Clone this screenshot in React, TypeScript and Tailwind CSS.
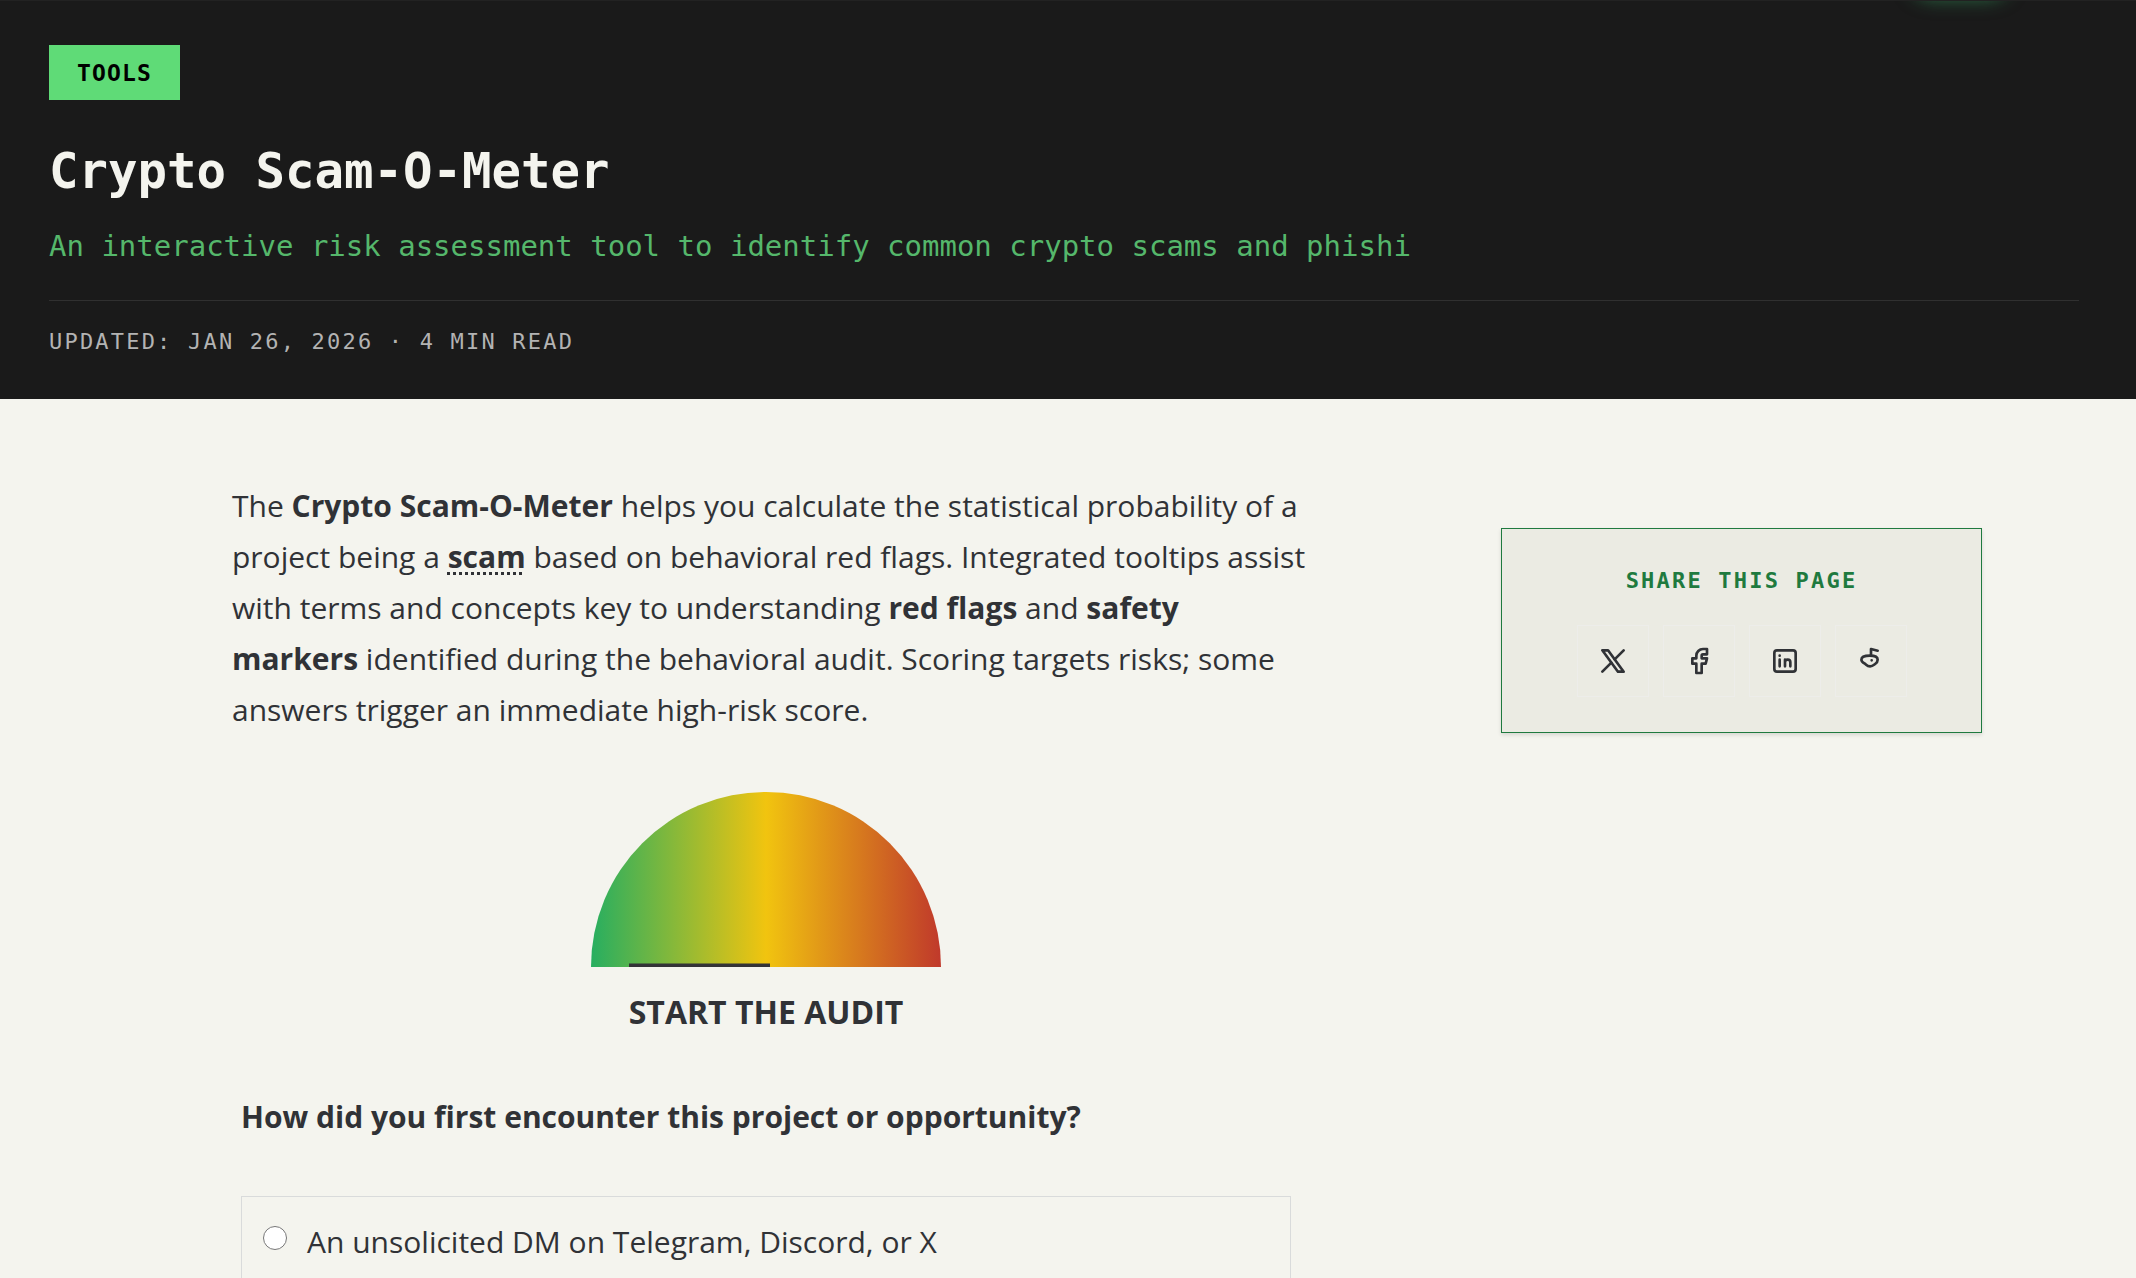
import { useState } from 'react';

const mono = "font-['DejaVu_Sans_Mono',monospace]";

const shareLinks = [
  {
    name: 'X',
    href: '#share-x',
    paths: ['M4 4l11.733 16h4.267l-11.733 -16z', 'M4 20l6.768 -6.768m2.46 -2.46l6.772 -6.772'],
  },
  {
    name: 'Facebook',
    href: '#share-facebook',
    paths: ['M7 10v4h3v7h4v-7h3l1 -4h-4v-2a1 1 0 0 1 1 -1h3v-4h-3a5 5 0 0 0 -5 5v2h-3'],
  },
  {
    name: 'LinkedIn',
    href: '#share-linkedin',
    paths: [
      'M4 6a2 2 0 0 1 2 -2h12a2 2 0 0 1 2 2v12a2 2 0 0 1 -2 2h-12a2 2 0 0 1 -2 -2z',
      'M8 11v5M8 8v.01M12 16v-5M16 16v-3a2 2 0 0 0 -4 0',
    ],
  },
  {
    name: 'Reddit',
    href: '#share-reddit',
    paths: [
      'M11.200 8c3.500 0 5.800 .8 5.800 3c0 2.200 -1.400 2.800 -2.400 3.600c-1 .8 -1.800 1.400 -3.300 1.400s-2.300 -.6 -3.200 -1.400c-1.200 -1 -3.300 -1.600 -3.300 -3.600c0 -2.200 2.400 -3 6.400 -3z',
      'M12 8v-5l5 1.300M12.500 11.500v.01',
    ],
  },
];

const options = ['An unsolicited DM on Telegram, Discord, or X'];

function PageHeader() {
  return (
    <header className="relative overflow-hidden border-t border-[#222222] bg-[#1a1a1a] px-[49px] pt-11 pb-9 text-[#f4f4ee]">
      <div className="absolute -top-11 right-[128px] h-10 w-24 rounded-3xl shadow-[0_0_20px_#2f7f4f]" />
      <div className="mr-2">
        <span className={`${mono} inline-block bg-[#5fdb77] px-7 pt-[2px] text-[23px] leading-[53px] font-bold tracking-wider text-black`}>
          TOOLS
        </span>
        <h1 className={`${mono} mt-[37px] text-[49px] leading-[70px] font-bold`}>Crypto Scam-O-Meter</h1>
        <p className={`${mono} mt-[14px] text-[29px] leading-[50px] text-[#55b76b]`}>
          An interactive risk assessment tool to identify common crypto scams and phishi
        </p>
        <p className={`${mono} mt-[29px] border-t border-[#303030] pt-5 text-[22px] leading-[42px] tracking-widest text-[#b3b3b3]`}>
          UPDATED: JAN 26, 2026 · 4 MIN READ
        </p>
      </div>
    </header>
  );
}

function Gauge() {
  return (
    <svg viewBox="0 0 350 175" className="mx-auto w-[350px]" role="img" aria-label="Risk gauge">
      <defs>
        <linearGradient id="risk">
          <stop offset="0" stopColor="#27ae60" />
          <stop offset="0.5" stopColor="#f1c40f" />
          <stop offset="1" stopColor="#c0392b" />
        </linearGradient>
      </defs>
      <path d="M0 175a175 175 0 0 1 350 0z" fill="url(#risk)" />
      <rect x="38" y="171.500" width="141" height="3.500" fill="#333337" />
    </svg>
  );
}

function ShareCard() {
  return (
    <aside className="mt-[33px] w-[481px] shrink-0 border border-[#1f7a3f] bg-[#ebebe3] pt-[29px] pb-[35px] shadow-[0_2px_4px_rgba(0,0,0,0.12)]">
      <h2 className={`${mono} text-center text-[22px] leading-[46px] font-bold tracking-widest text-[#1f7a3f]`}>
        SHARE THIS PAGE
      </h2>
      <nav aria-label="Share" className="mt-[21px] flex justify-center gap-[14px]">
        {shareLinks.map(link => (
          <a
            key={link.name}
            href={link.href}
            aria-label={link.name}
            className="flex size-[72px] items-center justify-center border border-[#ededea] text-[#303236]"
          >
            <svg
              viewBox="0 0 24 24"
              className="size-8"
              fill="none"
              stroke="currentColor"
              strokeWidth="2"
              strokeLinecap="round"
              strokeLinejoin="round"
            >
              {link.paths.map(d => <path key={d} d={d} />)}
            </svg>
          </a>
        ))}
      </nav>
    </aside>
  );
}

export default function App() {
  const [answer, setAnswer] = useState('');

  return (
    <div className="h-screen overflow-hidden bg-[#f4f4ee] font-['Open_Sans',sans-serif] text-[#303236]">
      <PageHeader />
      <main className="flex items-start justify-between pt-24 pr-[154px] pl-[232px]">
        <article className="-mt-[15px] w-[1068px]">
          <p className="-mr-2 text-[30px] leading-[51px]">
            The <strong>Crypto Scam-O-Meter</strong> helps you calculate the statistical probability of a project being a{' '}
            <strong className="underline decoration-dotted decoration-3 underline-offset-4">scam</strong> based on behavioral
            red flags. Integrated tooltips assist with terms and concepts key to understanding <strong>red flags</strong> and{' '}
            <strong>safety markers</strong> identified during the behavioral audit. Scoring targets risks; some answers
            trigger an immediate high-risk score.
          </p>
          <section className="px-[9px] pt-[57px]">
            <Gauge />
            <h2 className="mt-[19px] text-center text-[32px] leading-[51px] font-bold">START THE AUDIT</h2>
            <fieldset className="pt-[54px]">
              <legend className="contents">
                <span className="block text-[30px] leading-[51px] font-bold">
                  How did you first encounter this project or opportunity?
                </span>
              </legend>
              <div className="mt-[54px]">
                {options.map(option => (
                  <label
                    key={option}
                    className="flex h-28 items-start gap-5 border border-[#d9dbdb] px-[21px] py-[19px] text-[30px] leading-[51px]"
                  >
                    <input
                      type="radio"
                      name="encounter"
                      checked={answer === option}
                      onChange={() => setAnswer(option)}
                      className="mt-[10px] size-6 shrink-0"
                    />
                    {option}
                  </label>
                ))}
              </div>
            </fieldset>
          </section>
        </article>
        <ShareCard />
      </main>
    </div>
  );
}
